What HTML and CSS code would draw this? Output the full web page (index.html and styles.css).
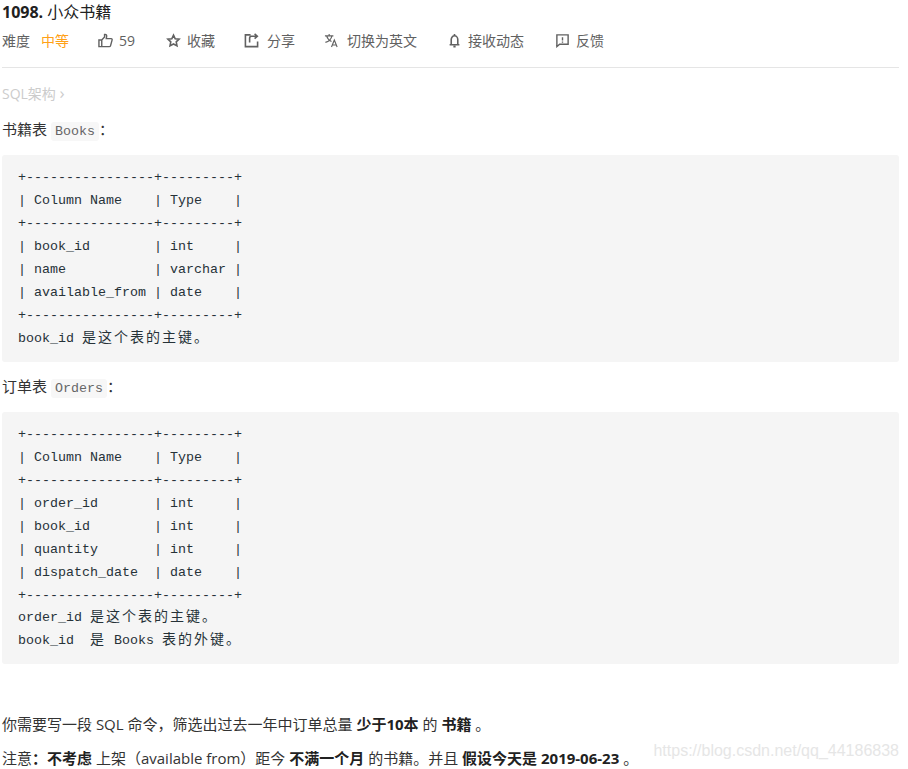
FILE: index.html
```html
<!DOCTYPE html>
<html lang="zh-CN">
<head>
<meta charset="utf-8">
<title>1098. 小众书籍</title>
<link rel="stylesheet" href="styles.css">
</head>
<body>
<main class="page">
  <header class="head">
    <h1 class="title"><span class="num">1098.</span> 小众书籍</h1>
    <div class="meta">
      <span class="item diff">难度<span class="level">中等</span></span>
      <span class="item like"><svg class="ic" viewBox="0 0 16 16"><path d="M1 7.500h3v7H1zM4 7.500l3-3.200V1.600c1.500-.5 2.500.6 2.200 2.200L8.800 6H14c.9 0 1.300.8 1 1.600l-1.600 5.800c-.2.7-.7 1.100-1.400 1.100H4" fill="none" stroke="#616161" stroke-width="1.500"/></svg>59</span>
      <span class="item star"><svg class="ic" viewBox="0 0 16 16"><path d="M8 2.200l1.800 3.900 4.200.5-3.100 2.900.8 4.200L8 11.700l-3.700 2 .8-4.200L2 6.600l4.200-.5z" fill="none" stroke="#616161" stroke-width="1.700"/></svg>收藏</span>
      <span class="item share"><svg class="ic wide" viewBox="0 0 16 16"><path d="M7 2H1.500v12.500h13V9M6 10V5.500c0-1.300.8-2 2-2h6M11.300 1l2.900 2.500L11.300 6" fill="none" stroke="#616161" stroke-width="1.700"/></svg>分享</span>
      <span class="item trans"><svg class="ic wide" viewBox="0 0 16 16"><path d="M1 3h9M5.500 1v2M8.500 3C7.800 6 5 9 1.500 10M2.800 3c.8 3 3 5 5.200 6M8 15l3-7.500 3 7.500M9 12.800h4" fill="none" stroke="#616161" stroke-width="1.200"/></svg>切换为英文</span>
      <span class="item bell"><svg class="ic" viewBox="0 0 16 16"><path d="M2.800 12.500h10.400M4.500 12.500V7c0-2.200 1.500-4 3.500-4s3.500 1.800 3.500 4v5.500M6.800 14.500h2.400M8 1v2" fill="none" stroke="#616161" stroke-width="1.700"/></svg>接收动态</span>
      <span class="item feed"><svg class="ic" viewBox="0 0 16 16"><path d="M2 2h12v10H5l-3 2.500zM8 4.500v3.500M8 9v1.300" fill="none" stroke="#616161" stroke-width="1.500"/></svg>反馈</span>
    </div>
  </header>
  <nav class="crumb">SQL架构 <span class="chev">›</span></nav>
  <p class="para">书籍表 <code class="inline">Books</code>：</p>
  <pre class="block">+----------------+---------+
| Column Name    | Type    |
+----------------+---------+
| book_id        | int     |
| name           | varchar |
| available_from | date    |
+----------------+---------+
book_id <span class="cjk">是这个表的主键。</span></pre>
  <p class="para">订单表 <code class="inline">Orders</code>：</p>
  <pre class="block">+----------------+---------+
| Column Name    | Type    |
+----------------+---------+
| order_id       | int     |
| book_id        | int     |
| quantity       | int     |
| dispatch_date  | date    |
+----------------+---------+
order_id <span class="cjk">是这个表的主键。</span>
book_id  <span class="cjk">是</span> Books <span class="cjk">表的外键。</span></pre>
  <p class="para gap">你需要写一段 SQL 命令，筛选出过去一年中订单总量 <strong>少于10本</strong> 的 <strong>书籍</strong> 。</p>
  <p class="para">注意<strong>：不考虑</strong> 上架（available from）距今 <strong>不满一个月</strong> 的书籍。并且 <strong>假设今天是 2019-06-23</strong> 。</p>
</main>
<div class="mark">https://blog.csdn.net/qq_44186838</div>
</body>
</html>
```
FILE: styles.css
```css
html, body { margin: 0; height: 769px; overflow: hidden; background: #fff; }
body { position: relative; font-family: "Open Sans", "Noto Sans CJK SC", sans-serif; font-size: 15px; color: #333; }
.page { padding: 0 9px 0 2px; }
.head { border-bottom: 1px solid #e5e5e5; height: 67px; }
.title { margin: 0; height: 24px; line-height: 24px; font-size: 16px; font-weight: 400; color: #212121; }
.num { font-weight: 700; }
.meta { display: flex; height: 24px; margin-top: 4px; padding-bottom: 1px; align-items: center; color: #616161; font-size: 14px; }
.item { display: inline-flex; align-items: center; }
.ic { width: 15px; height: 15px; margin-right: 6px; flex: none; }
.wide { margin-right: 8px; }
.diff { width: 96px; }
.level { color: #ffa116; margin-left: 11px; }
.like { width: 68px; }
.star { width: 78px; }
.share { width: 80px; }
.trans { width: 123px; }
.bell { width: 108px; }
.para { margin: 0; line-height: 20px; }
.crumb { color: #ccc; font-size: 14px; line-height: 20px; margin-top: 16px; }
.chev { font-size: 17px; line-height: 17px; }
.crumb + .para { margin-top: 15px; }
.inline { font-family: "Liberation Mono", "Noto Sans CJK SC", monospace; font-size: 13.33px; color: #666; background: #f7f7f7; border-radius: 3px; padding: 2px 4px; }
.block { margin: 13px 0 14px; padding: 12.4px 16px 11.2px; background: #f5f5f5; border-radius: 3px; font-family: "Liberation Mono", "Noto Sans CJK SC", monospace; font-size: 13.33px; line-height: 22.9px; color: #263238; }
.cjk { font-size: 14px; line-height: 1; letter-spacing: 2px; }
.gap { margin-top: 50px; }
.para + .para { margin-top: 14px; }
strong { font-weight: 700; color: #212121; }
.mark { position: absolute; right: 9px; bottom: 9px; font-family: "Liberation Sans", sans-serif; font-size: 16px; color: #e6e6e6; }
```
